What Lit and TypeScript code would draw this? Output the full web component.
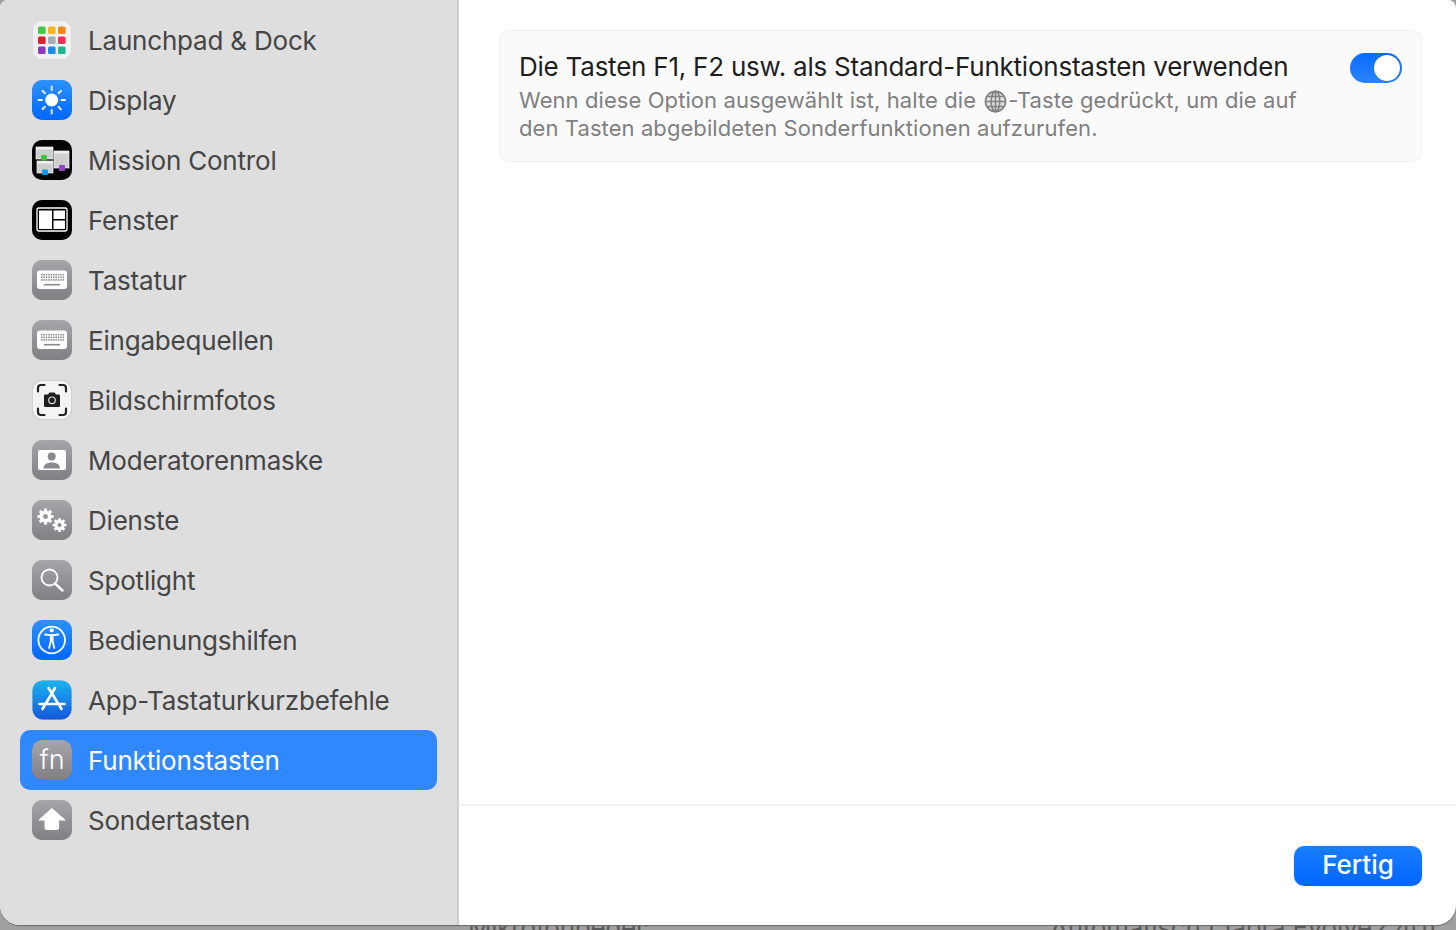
import { LitElement, html, css, svg } from "lit";
import { customElement } from "lit/decorators.js";

const gray = (inner: unknown, id: string) => svg`<defs><linearGradient id=${id} x1="0" y1="0" x2="0" y2="1"><stop offset="0" stop-color="#a6a5aa"/><stop offset="1" stop-color="#807f84"/></linearGradient></defs><rect x="1" y="0.5" width="40" height="40" rx="10" fill=${`url(#${id})`}/>${inner}`;
const blue = (inner: unknown, id: string) => svg`<defs><linearGradient id=${id} x1="0" y1="0" x2="0" y2="1"><stop offset="0" stop-color="#2d92ff"/><stop offset="1" stop-color="#0066ff"/></linearGradient></defs><rect x="1" y="0.5" width="40" height="40" rx="10" fill=${`url(#${id})`}/>${inner}`;
const keyboard = (x: number, y: number, w: number) => {
  const dots = [];
  for (let r = 0; r < 3; r++) for (let c = 0; c < 10; c++) dots.push(svg`<rect x=${x + 4 + c * 2.4} y=${y + 3.4 + r * 2.6} width="1.5" height="1.6" fill="#8a898e"/>`);
  return svg`<rect x=${x} y=${y} width=${w} height="18.500" rx="3" fill="#fff"/>${dots}<rect x=${x + 7} y=${y + 13.400} width=${w - 14} height="1.600" fill="#8a898e"/>`;
};
const gear = (cx: number, cy: number, r: number) => {
  const teeth = [];
  for (let i = 0; i < 8; i++) teeth.push(svg`<rect x=${cx - r * 0.24} y=${cy - r * 1.25} width=${r * 0.48} height=${r * 0.6} fill="#fff" transform=${`rotate(${i * 45} ${cx} ${cy})`}/>`);
  return svg`${teeth}<circle cx=${cx} cy=${cy} r=${r * 0.66} fill="none" stroke="#fff" stroke-width=${r * 0.55}/>`;
};
const launch = ["#46c84a", "#f5b51e", "#ec8a1c", "#d9222a", "#a5adb2", "#f0305c", "#8d3bb8", "#1b8cec", "#1fb58f"];

const icons: Record<string, unknown> = {
  launchpad: svg`<rect x="1.500" y="1" width="39" height="39" rx="10" fill="#f1f1f1"/>${launch.map((c, i) => svg`<rect x=${7 + (i % 3) * 10} y=${7 + Math.floor(i / 3) * 10} width="7.600" height="7.600" rx="1.600" fill=${c}/>`)}`,
  display: blue(svg`<circle cx="20.700" cy="20.500" r="6.500" fill="#fff"/><g stroke="#fff" stroke-width="1.800" stroke-linecap="round"><path d="M20.700 7v3.500M20.700 30.500v3.500M7.500 20.500h3.500M30.500 20.500h3.500M11.500 11.300l2.400 2.400M27.600 27.400l2.400 2.400M11.500 29.700l2.400-2.400M27.600 13.700l2.400-2.400"/></g>`, "g-display"),
  mission: svg`<rect x="1" y="0.500" width="40" height="40" rx="10" fill="#050505"/><rect x="5" y="7.500" width="17" height="12" fill="#cfcfcf" stroke="#f2f2f2" stroke-width=".7"/><rect x="5" y="7.500" width="17" height="2.500" fill="#efefef"/><rect x="6" y="21.500" width="16" height="12" fill="#cfcfcf" stroke="#f2f2f2" stroke-width=".7"/><rect x="6" y="21.500" width="16" height="2.500" fill="#efefef"/><rect x="23" y="11.500" width="15" height="17" fill="#cfcfcf" stroke="#f2f2f2" stroke-width=".7"/><rect x="23" y="11.500" width="15" height="2.500" fill="#efefef"/><rect x="10" y="15.500" width="6" height="5.500" rx="1" fill="#37c93c"/><rect x="11" y="30" width="6" height="5.500" rx="1" fill="#0f97f0"/><rect x="28" y="25.500" width="6" height="6" rx="1" fill="#9a3fd0"/>`,
  windows: svg`<rect x="1" y="0.500" width="40" height="40" rx="10" fill="#000"/><rect x="6" y="8.500" width="30" height="23" rx="2" fill="none" stroke="#fff" stroke-width="1.300"/><rect x="8" y="11" width="13" height="18.500" fill="#fff"/><rect x="22.500" y="11" width="11.500" height="8.500" fill="#fff"/><rect x="22.500" y="21" width="11.500" height="8.500" fill="#fff"/>`,
  keyboard: gray(keyboard(6, 11, 30), "g-kb"),
  input: gray(keyboard(6, 11, 30), "g-in"),
  screenshot: svg`<rect x="1.500" y="1" width="39" height="39" rx="10" fill="#f4f4f4" stroke="#d2d2d2"/><g fill="none" stroke="#222" stroke-width="2.200" stroke-linecap="round"><path d="M7 12v-3.500a3 3 0 0 1 3-3h3.500M28.500 5.500h3.500a3 3 0 0 1 3 3v3.500M7 29v3.500a3 3 0 0 0 3 3h3.500M28.500 35.500h3.500a3 3 0 0 0 3-3v-3.500"/></g><path d="M14.300 15h2.700l1.500-2h5l1.500 2h2.700a1.300 1.300 0 0 1 1.300 1.300v10a1.300 1.300 0 0 1-1.300 1.300h-13.400a1.300 1.300 0 0 1-1.300-1.300v-10a1.300 1.300 0 0 1 1.300-1.300z" fill="#202020"/><circle cx="21" cy="20.800" r="3.300" fill="none" stroke="#ddd" stroke-width="1.200"/>`,
  moderator: gray(svg`<rect x="7" y="10.500" width="28" height="20" rx="2" fill="#fff"/><circle cx="20.700" cy="17" r="4" fill="#8a898e"/><path d="M12.500 29c0-4 3.500-6 8.200-6s8.300 2 8.300 6z" fill="#8a898e"/>`, "g-mod"),
  services: gray(svg`${gear(14.500, 17, 6.400)}${gear(28.500, 25.500, 5.500)}`, "g-svc"),
  spotlight: gray(svg`<circle cx="18.500" cy="18" r="8" fill="none" stroke="#fff" stroke-width="1.800"/><path d="M24.500 24.500l7 6.500" stroke="#fff" stroke-width="2.400" stroke-linecap="round"/>`, "g-spot"),
  access: blue(svg`<circle cx="20.700" cy="20.500" r="13.300" fill="none" stroke="#fff" stroke-width="1.800"/><circle cx="20.700" cy="10.800" r="2.100" fill="#fff"/><path d="M14 15l5 .7h3.400l5-.7" fill="none" stroke="#fff" stroke-width="1.800" stroke-linecap="round" stroke-linejoin="round"/><rect x="18.900" y="15" width="3.600" height="7.500" fill="#fff"/><path d="M19.700 22l-1.600 6.500M21.700 22l1.600 6.500" fill="none" stroke="#fff" stroke-width="1.800" stroke-linecap="round"/>`, "g-acc"),
  appstore: svg`<defs><linearGradient id="g-app" x1="0" y1="0" x2="0" y2="1"><stop offset="0" stop-color="#1cb4f0"/><stop offset="1" stop-color="#1457dc"/></linearGradient></defs><rect x="1.500" y="1" width="39" height="39" rx="10" fill="url(#g-app)"/><g stroke="#fff" stroke-width="2.600" stroke-linecap="round" fill="none"><path d="M17.500 8.500L30.500 29.500M24 8.500L11.500 29.500M8.500 24.500h25"/></g>`,
  fn: gray(svg``, "g-fn"),
  special: gray(svg`<path d="M20.800 9L8 20.500h6v8a1.500 1.500 0 0 0 1.500 1.500h10.600a1.500 1.500 0 0 0 1.500-1.500v-8H34z" fill="#fff" stroke="#fff" stroke-linejoin="round"/>`, "g-sp"),
};

const items = [
  ["launchpad", "Launchpad & Dock"],
  ["display", "Display"],
  ["mission", "Mission Control"],
  ["windows", "Fenster"],
  ["keyboard", "Tastatur"],
  ["input", "Eingabequellen"],
  ["screenshot", "Bildschirmfotos"],
  ["moderator", "Moderatorenmaske"],
  ["services", "Dienste"],
  ["spotlight", "Spotlight"],
  ["access", "Bedienungshilfen"],
  ["appstore", "App-Tastaturkurzbefehle"],
  ["fn", "Funktionstasten"],
  ["special", "Sondertasten"],
];

@customElement("app-root")
export class AppRoot extends LitElement {
  static styles = css`
    :host {
      display: block;
      width: 1456px;
      height: 930px;
      overflow: hidden;
      position: relative;
      background: #a0a0a0;
      font-family: Inter, "Liberation Sans", sans-serif;
    }
    .behind {
      position: absolute;
      left: 0;
      right: 0;
      top: 913px;
      height: 30px;
      font-size: 26px;
      line-height: 30px;
      letter-spacing: -0.25px;
      color: #5c5c5c;
    }
    .behind span { position: absolute; top: 0; white-space: nowrap; }
    .b1 { left: 468px; }
    .b2 { left: 1050px; }
    .window {
      position: relative;
      width: 1456px;
      height: 925px;
      display: flex;
      overflow: hidden;
      border-radius: 8px 8px 20px 20px;
      background: #fff;
      box-shadow: 0 1px 1px #6a6a6a;
    }
    .sidebar {
      width: 459px;
      flex: none;
      box-sizing: border-box;
      padding: 10px 20px 0 20px;
      background: #dedede;
      border-right: 2px solid #d0d0d0;
    }
    .row {
      height: 60px;
      display: flex;
      align-items: center;
      gap: 15px;
      padding-left: 11px;
      border-radius: 10px;
      font-size: 26px;
      letter-spacing: -0.2px;
      color: #454545;
      white-space: nowrap;
    }
    .row.sel { background: #2f88ff; color: #fff; }
    .row svg { width: 42px; height: 42px; flex: none; display: block; filter: drop-shadow(0 .5px .7px rgba(0,0,0,.25)); }
    .ic { position: relative; width: 42px; height: 42px; flex: none; }
    .fn {
      position: absolute;
      inset: 0;
      display: flex;
      align-items: center;
      justify-content: center;
      color: #fff;
      font-size: 27px;
      font-weight: 300;
      line-height: 40px;
    }
    .main { flex: 1; display: flex; flex-direction: column; min-width: 0; }
    .content { flex: 1; padding: 30px 34px 0 40px; }
    .card {
      height: 132px;
      box-sizing: border-box;
      display: flex;
      justify-content: space-between;
      padding: 20px 19px 0 19px;
      background: #fafafa;
      border: 1px solid #efefef;
      border-radius: 10px;
    }
    .title { font-size: 26px; letter-spacing: -0.23px; line-height: 32px; color: #1e1e1e; white-space: nowrap; }
    .desc { font-size: 22px; letter-spacing: 0.08px; line-height: 28px; color: #808080; margin-top: 3px; white-space: nowrap; }
    .globe { width: 23px; height: 23px; vertical-align: -5px; margin: 0 1px 0 2px; }
    .toggle {
      position: relative;
      width: 52px;
      height: 30px;
      margin-top: 2px;
      border-radius: 15px;
      background: linear-gradient(#0a6cff, #2a84ff);
      flex: none;
    }
    .knob {
      position: absolute;
      right: 2px;
      top: 2px;
      width: 26px;
      height: 26px;
      border-radius: 50%;
      background: #fff;
      box-shadow: 0 0 1px rgba(0,0,0,.4);
    }
    .footer {
      flex: none;
      height: 121px;
      box-sizing: border-box;
      border-top: 2px solid #f1f1f1;
      padding: 40px 34px 0 0;
      display: flex;
      justify-content: flex-end;
      align-items: flex-start;
    }
    .done {
      width: 128px;
      height: 40px;
      border: 0;
      padding: 0 0 2px;
      border-radius: 10px;
      background: linear-gradient(#1a7eff, #0066ff);
      color: #fff;
      font: 500 26px/36px Inter, "Liberation Sans", sans-serif;
      box-shadow: 0 0 2px rgba(0,102,255,.25);
    }
  `;

  render() {
    return html`
      <div class="behind"><span class="b1">Mikrofonpegel:</span><span class="b2">Automatisch (Jabra Evolve2 40)</span></div>
      <div class="window">
        <nav class="sidebar">
          ${items.map(([k, label]) => html`
            <div class="row ${k === "fn" ? "sel" : ""}">
              <div class="ic"><svg viewBox="0 -0.5 42 42">${icons[k]}</svg>${k === "fn" ? html`<span class="fn">fn</span>` : ""}</div>
              <span>${label}</span>
            </div>`)}
        </nav>
        <main class="main">
          <div class="content">
            <section class="card">
              <div>
                <div class="title">Die Tasten F1, F2 usw. als Standard-Funktionstasten verwenden</div>
                <div class="desc">
                  <div>Wenn diese Option ausgewählt ist, halte die <svg class="globe" viewBox="0 0 24 24" fill="none" stroke="#808080" stroke-width="1.700"><circle cx="12" cy="12" r="10.500" fill="#808080" fill-opacity=".2"/><ellipse cx="12" cy="12" rx="4.500" ry="10.500"/><path d="M12 1.500v21M1.500 12h21M3.500 6.800h17M3.500 17.200h17"/></svg>-Taste gedrückt, um die auf</div>
                  <div>den Tasten abgebildeten Sonderfunktionen aufzurufen.</div>
                </div>
              </div>
              <div class="toggle"><div class="knob"></div></div>
            </section>
          </div>
          <footer class="footer"><button class="done">Fertig</button></footer>
        </main>
      </div>
    `;
  }
}
